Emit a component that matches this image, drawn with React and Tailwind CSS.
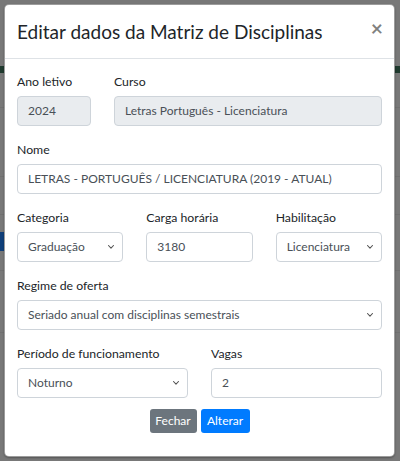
import React from "react";

const font = { fontFamily: 'Lato, "Noto Sans", sans-serif' };

function Chevron() {
  return (
    <svg width="8" height="5" viewBox="0 0 8 5" className="absolute right-[7px] top-1/2 -translate-y-1/2">
      <path d="M1.5 1l2.5 2.7 2.5-2.7" fill="none" stroke="#555" strokeWidth="1.1" strokeLinecap="round" strokeLinejoin="round" />
    </svg>
  );
}

function Label({ children }) {
  return <div className="text-[12.25px] leading-[19px] text-[#212529] mb-[5px] whitespace-nowrap">{children}</div>;
}

function Field({ value, disabled }) {
  return (
    <div
      className={`h-[30px] rounded-[4px] border border-[#ced4da] pl-[10px] flex items-center text-[12px] text-[#495057] whitespace-nowrap overflow-hidden ${disabled ? "bg-[#e9ecef]" : "bg-white"}`}
    >
      {value}
    </div>
  );
}

function Select({ value }) {
  return (
    <div className="relative h-[30px] rounded-[4px] border border-[#ced4da] bg-white pl-[10px] flex items-center text-[12px] text-[#495057] whitespace-nowrap">
      {value}
      <Chevron />
    </div>
  );
}

export default function App() {
  return (
    <div className="relative w-[400px] h-[461px] bg-[#787878] overflow-hidden" style={font}>
      {/* faint page behind overlay */}
      <div className="absolute left-0 right-0 top-[66px] h-[7px] bg-[#1f3a2e]" />
      <div className="absolute left-0 right-0 top-[107px] h-px bg-[#707070]" />
      <div className="absolute left-0 right-0 top-[176px] h-px bg-[#707070]" />
      <div className="absolute left-0 right-0 top-[214px] h-px bg-[#707070]" />
      <div className="absolute left-0 w-[5px] top-[232px] h-[19px] bg-[#0f3f7a]" />
      <div className="absolute left-0 right-0 top-[270px] h-px bg-[#707070]" />
      <div className="absolute left-0 right-0 top-[332px] h-px bg-[#707070]" />

      {/* modal */}
      <div className="absolute left-[4px] top-[4px] w-[391px] h-[453px] bg-white rounded-[5px] border border-[#5a5a5a]/60 shadow-[0_1px_2px_rgba(0,0,0,0.3)]">
        <div className="flex items-start justify-between pl-[12px] pr-[12px] pt-[12px] pb-[11px] border-b border-[#dee2e6]">
          <div className="text-[19px] leading-[30px] text-[#212529]">Editar dados da Matriz de Disciplinas</div>
          <div className="text-[21px] leading-[30px] font-bold text-black/50 -mt-[4px] -mr-[1px]">×</div>
        </div>
        <div className="px-[12px] pt-[13px]">
          <div className="grid grid-cols-4 gap-x-[23px] mb-[14px]">
            <div>
              <Label>Ano letivo</Label>
              <Field value="2024" disabled />
            </div>
            <div className="col-span-3">
              <Label>Curso</Label>
              <Field value="Letras Português - Licenciatura" disabled />
            </div>
          </div>
          <div className="mb-[14px]">
            <Label>Nome</Label>
            <Field value="LETRAS - PORTUGUÊS / LICENCIATURA (2019 - ATUAL)" />
          </div>
          <div className="grid grid-cols-3 gap-x-[23px] mb-[14px]">
            <div>
              <Label>Categoria</Label>
              <Select value="Graduação" />
            </div>
            <div>
              <Label>Carga horária</Label>
              <Field value="3180" />
            </div>
            <div>
              <Label>Habilitação</Label>
              <Select value="Licenciatura" />
            </div>
          </div>
          <div className="mb-[14px]">
            <Label>Regime de oferta</Label>
            <Select value="Seriado anual com disciplinas semestrais" />
          </div>
          <div className="grid grid-cols-2 gap-x-[23px]">
            <div>
              <Label>Período de funcionamento</Label>
              <Select value="Noturno" />
            </div>
            <div>
              <Label>Vagas</Label>
              <Field value="2" />
            </div>
          </div>
          <div className="flex justify-center gap-[4px] mt-[11px]">
            <button className="h-[24px] w-[47px] rounded-[3px] bg-[#6c757d] text-white text-[12px] leading-[24px]">Fechar</button>
            <button className="h-[24px] w-[49px] rounded-[3px] bg-[#007bff] text-white text-[12px] leading-[24px]">Alterar</button>
          </div>
        </div>
      </div>
    </div>
  );
}
